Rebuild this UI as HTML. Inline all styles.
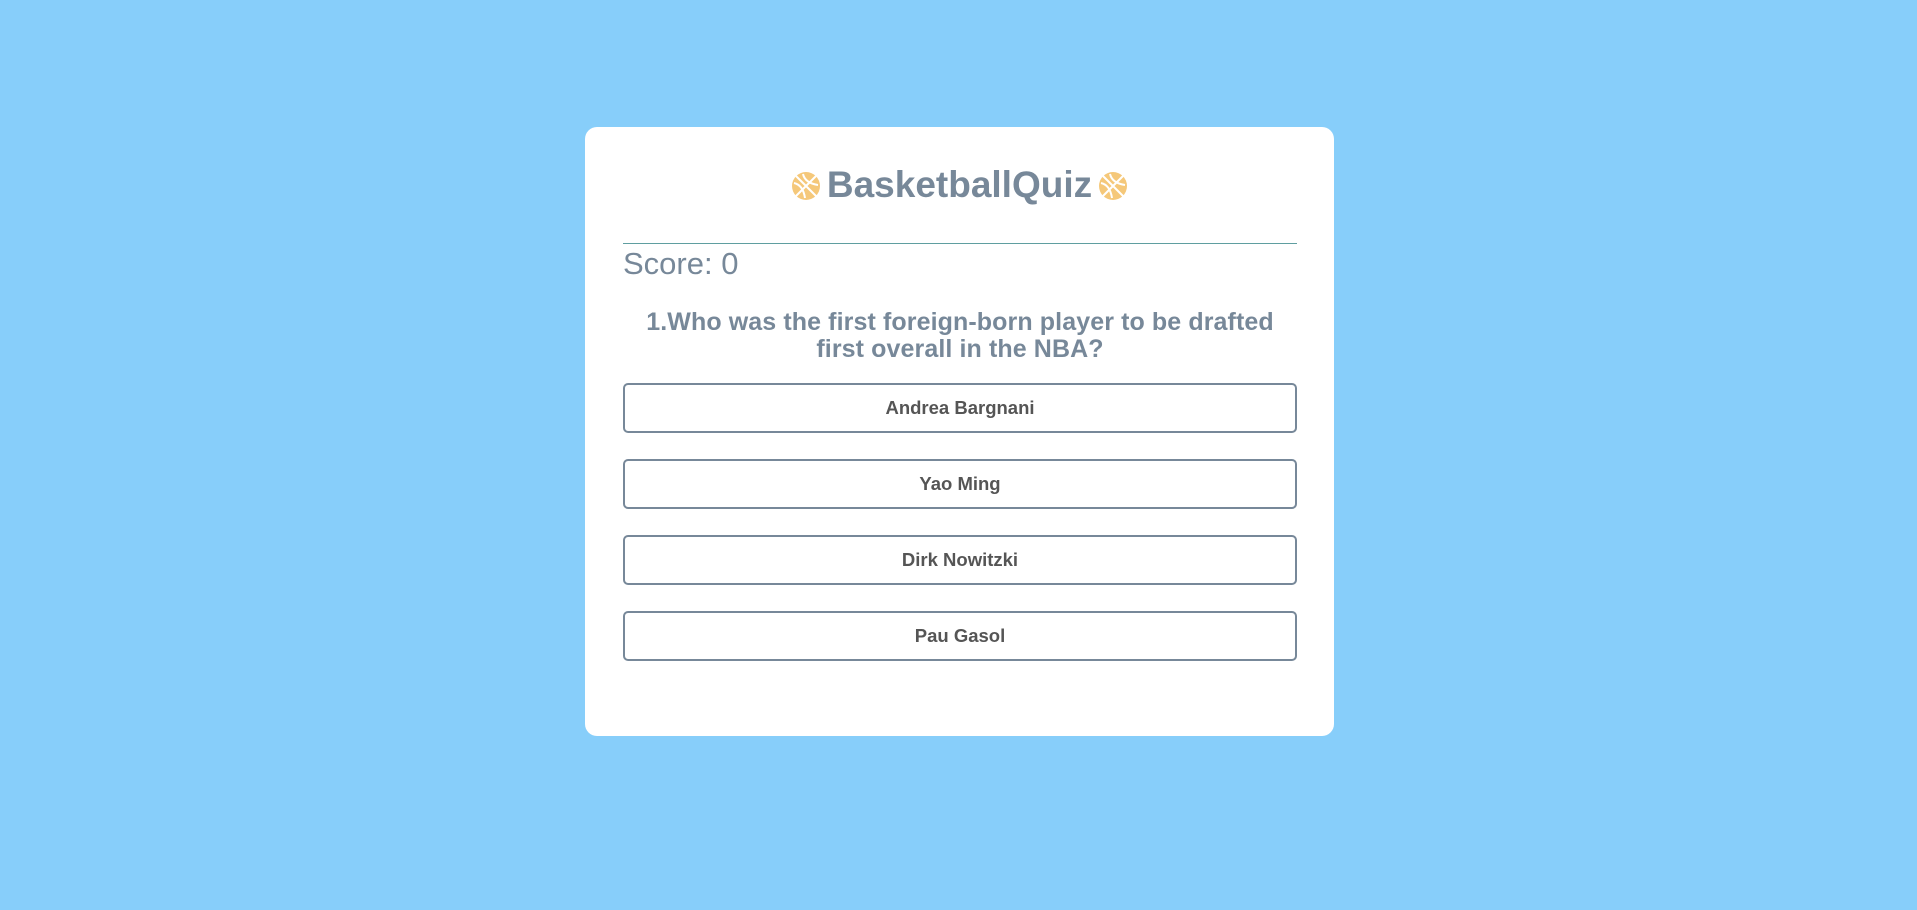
<!DOCTYPE html>
<html><head><meta charset="utf-8"><style>
html,body{margin:0;padding:0}
body{width:1917px;height:910px;background:#87cefa;font-family:"Liberation Sans",sans-serif;position:relative;overflow:hidden}
.card{position:absolute;left:585px;top:127px;width:749px;height:609px;background:#fff;border-radius:12px}
.title{position:absolute;left:0;width:749px;top:162px;text-align:center;color:#778899;font-weight:bold;font-size:37px;letter-spacing:0px;line-height:46px}
.title svg{vertical-align:-4px;margin:0 6px}
.line{position:absolute;left:623px;top:243px;width:674px;height:1px;background:#5f9ea0}
.score{position:absolute;left:623px;top:244px;font-size:31px;color:#778899;line-height:40px}
.q{position:absolute;left:623px;width:674px;top:309px;text-align:center;color:#778899;font-weight:bold;font-size:25px;line-height:27px;letter-spacing:0.1px}
.b{position:absolute;left:623px;width:670px;height:46px;border:2px solid #778899;border-radius:5px;text-align:center;line-height:46px;font-weight:bold;font-size:18.5px;color:#555}
</style></head><body>
<div class="card"></div>
<div class="title" style="left:585px;top:162px"><svg width="30" height="30" viewBox="0 0 30 30"><circle cx="15" cy="15" r="14" fill="#f5c87a"/><g stroke="#fff" stroke-width="2" fill="none"><path d="M5 5 L25 25 M25 5 L5 25"/><path d="M3 12 Q12 14 14 27"/><path d="M12 3 Q14 12 27 14"/></g></svg>BasketballQuiz<svg width="30" height="30" viewBox="0 0 30 30"><circle cx="15" cy="15" r="14" fill="#f5c87a"/><g stroke="#fff" stroke-width="2" fill="none"><path d="M5 5 L25 25 M25 5 L5 25"/><path d="M3 12 Q12 14 14 27"/><path d="M12 3 Q14 12 27 14"/></g></svg></div>
<div class="line"></div>
<div class="score">Score: 0</div>
<div class="q">1.Who was the first foreign-born player to be drafted<br>first overall in the NBA?</div>
<div class="b" style="top:383px">Andrea Bargnani</div>
<div class="b" style="top:459px">Yao Ming</div>
<div class="b" style="top:535px">Dirk Nowitzki</div>
<div class="b" style="top:611px">Pau Gasol</div>
</body></html>
